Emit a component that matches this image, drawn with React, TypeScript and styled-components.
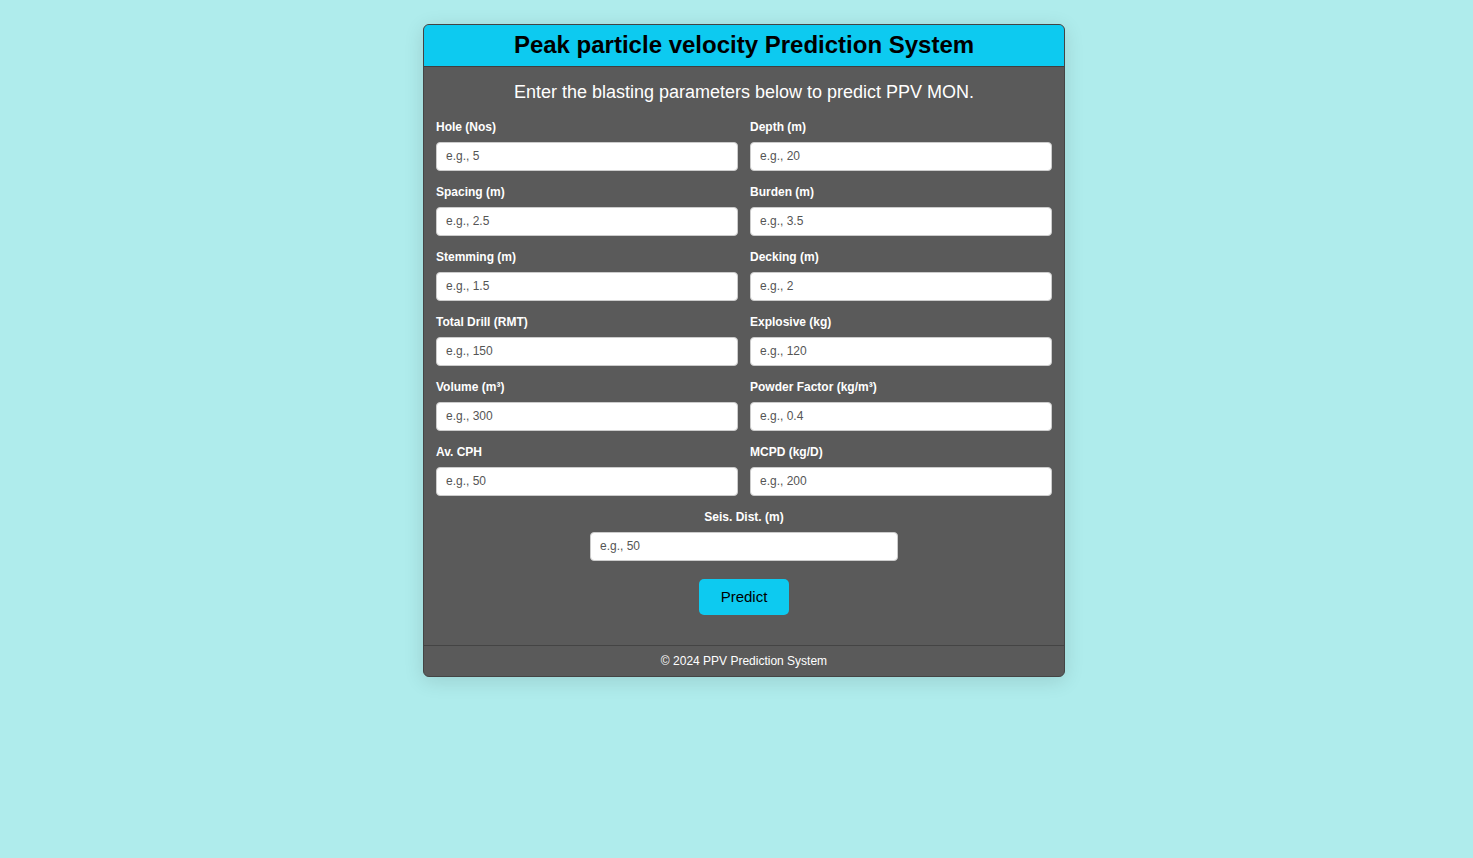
import React from "react";
import styled, { createGlobalStyle } from "styled-components";

const GlobalStyle = createGlobalStyle`
  body {
    margin: 0;
    background-color: #afecec;
    font-family: "Liberation Sans", Arial, sans-serif;
  }
`;

const Page = styled.div`
  display: flex;
  justify-content: center;
  padding: 24px 0 0 15px;
  min-height: 100vh;
  box-sizing: border-box;
`;

const Card = styled.div`
  width: 642px;
  box-sizing: border-box;
  border: 1px solid #444;
  border-radius: 6px;
  overflow: hidden;
  background-color: #5a5a5a;
  box-shadow: 0 4px 20px rgba(0, 0, 0, 0.12);
  align-self: flex-start;
`;

const Header = styled.header`
  background-color: #0dcaf0;
  height: 42px;
  box-sizing: border-box;
  padding-bottom: 2px;
  display: flex;
  align-items: center;
  justify-content: center;
  border-bottom: 1px solid #3f3f3f;
`;

const Title = styled.h1`
  margin: 0;
  font-size: 24px;
  font-weight: bold;
  color: #000;
`;

const Main = styled.main`
  padding: 15px 12px 30px;
`;

const Subtitle = styled.p`
  margin: 0 0 17px;
  text-align: center;
  color: #fff;
  font-size: 18px;
  line-height: 21px;
`;

const Grid = styled.div`
  display: grid;
  grid-template-columns: 1fr 1fr;
  column-gap: 12px;
  row-gap: 14px;
`;

const Field = styled.div<{ $center?: boolean }>`
  display: flex;
  flex-direction: column;
  align-items: ${(p) => (p.$center ? "center" : "stretch")};
  ${(p) => p.$center && "grid-column: 1 / -1;"}
`;

const Label = styled.label`
  display: block;
  color: #fff;
  font-size: 12px;
  font-weight: bold;
  line-height: 14px;
  margin-bottom: 8px;
`;

const Input = styled.input<{ $width?: number }>`
  box-sizing: border-box;
  height: 29px;
  width: ${(p) => (p.$width ? `${p.$width}px` : "100%")};
  border: 1px solid #ccc;
  border-radius: 4px;
  padding: 0 9px 2px;
  font-family: "Liberation Sans", Arial, sans-serif;
  font-size: 12px;
  background: #fff;
  &::placeholder {
    color: #555;
  }
`;

const Actions = styled.div`
  display: flex;
  justify-content: center;
  margin-top: 18px;
`;

const Button = styled.button`
  width: 90px;
  height: 36px;
  padding: 0 0 2px;
  border: none;
  border-radius: 5px;
  background-color: #0dcaf0;
  color: #000;
  font-family: "Liberation Sans", Arial, sans-serif;
  font-size: 15px;
  cursor: pointer;
`;

const Footer = styled.footer`
  border-top: 1px solid #444;
  height: 30px;
  display: flex;
  align-items: center;
  justify-content: center;
  color: #fff;
  font-size: 12px;
`;

const fields = [
  ["Hole (Nos)", "e.g., 5"],
  ["Depth (m)", "e.g., 20"],
  ["Spacing (m)", "e.g., 2.5"],
  ["Burden (m)", "e.g., 3.5"],
  ["Stemming (m)", "e.g., 1.5"],
  ["Decking (m)", "e.g., 2"],
  ["Total Drill (RMT)", "e.g., 150"],
  ["Explosive (kg)", "e.g., 120"],
  ["Volume (m³)", "e.g., 300"],
  ["Powder Factor (kg/m³)", "e.g., 0.4"],
  ["Av. CPH", "e.g., 50"],
  ["MCPD (kg/D)", "e.g., 200"],
];

export default function App() {
  return (
    <>
      <GlobalStyle />
      <Page>
        <Card>
          <Header>
            <Title>Peak particle velocity Prediction System</Title>
          </Header>
          <Main>
            <Subtitle>Enter the blasting parameters below to predict PPV MON.</Subtitle>
            <form onSubmit={(e) => e.preventDefault()}>
              <Grid>
                {fields.map(([label, ph]) => (
                  <Field key={label}>
                    <Label>{label}</Label>
                    <Input type="text" placeholder={ph} />
                  </Field>
                ))}
                <Field $center>
                  <Label>Seis. Dist. (m)</Label>
                  <Input type="text" placeholder="e.g., 50" $width={308} />
                </Field>
              </Grid>
              <Actions>
                <Button type="submit">Predict</Button>
              </Actions>
            </form>
          </Main>
          <Footer>© 2024 PPV Prediction System</Footer>
        </Card>
      </Page>
    </>
  );
}
